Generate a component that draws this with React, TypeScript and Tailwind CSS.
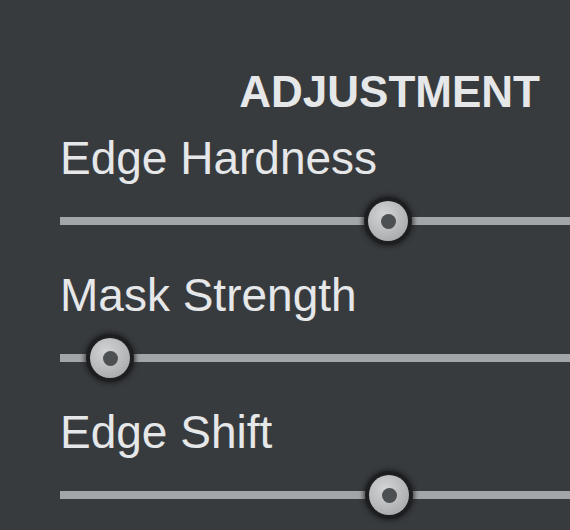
import React from "react";

const sliders = [
  { label: "Edge Hardness", pos: 328 },
  { label: "Mask Strength", pos: 50 },
  { label: "Edge Shift", pos: 329 },
];

function Thumb({ pos }: { pos: number }) {
  return (
    <div
      className="absolute top-1/2 -translate-y-1/2 w-[48px] h-[48px] rounded-full bg-[#1c1e20] flex items-center justify-center shadow-[0_0_4px_2px_rgba(20,22,24,0.6)]"
      style={{ left: pos - 24 }}
    >
      <div className="w-[40px] h-[40px] rounded-full bg-[radial-gradient(circle_at_40%_35%,#d2d4d5,#b3b5b7_60%,#9c9ea0)] flex items-center justify-center">
        <div className="w-[15px] h-[15px] rounded-full bg-[#4d5052]" />
      </div>
    </div>
  );
}

export default function App() {
  return (
    <div
      className="w-[570px] h-[530px] overflow-hidden bg-[#383b3e] text-[#e5e7e9] pl-[60px] pt-[68px]"
      style={{ fontFamily: '"Liberation Sans", Arial, sans-serif' }}
    >
      <div className="h-[48px] leading-[48px] text-[44px] font-bold text-right pr-[30px]">ADJUSTMENT</div>
      {sliders.map((s, i) => (
        <div key={s.label} className={i === 0 ? "mt-[18px]" : "mt-[25px]"}>
          <div className="h-[48px] leading-[48px] text-[46px] whitespace-nowrap">{s.label}</div>
          <div className="relative mt-[14px] h-[50px] flex items-center">
            <div className="w-full h-[8px] bg-[#a3a6a8]" />
            <Thumb pos={s.pos} />
          </div>
        </div>
      ))}
    </div>
  );
}
